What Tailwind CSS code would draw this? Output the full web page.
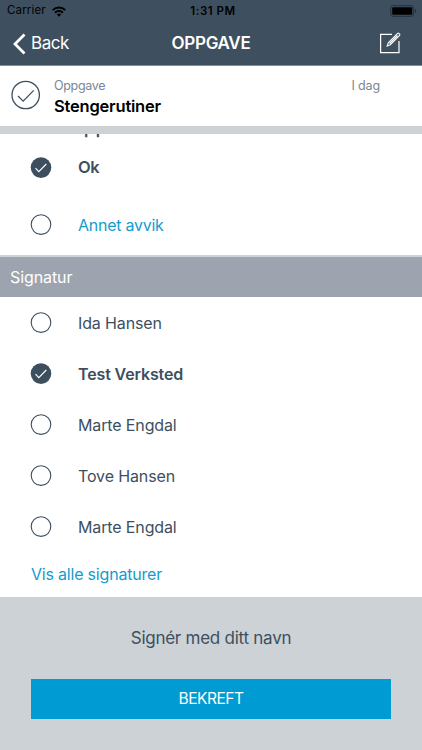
<!DOCTYPE html>
<html lang="no">
<head>
<meta charset="utf-8">
<title>Oppgave</title>
<script src="https://cdn.jsdelivr.net/npm/@tailwindcss/browser@4"></script>
</head>
<body class="w-[422px] h-[750px] overflow-hidden bg-white font-['Inter',sans-serif] text-[#3d4f5f] flex flex-col">
<svg class="hidden">
  <symbol id="off" viewBox="0 0 22 22"><circle cx="11" cy="10.6" r="9.8" fill="none" stroke="#3d4f5f" stroke-width="1.1"/></symbol>
  <symbol id="on" viewBox="0 0 22 22"><circle cx="11" cy="10.6" r="10.3" fill="#3d4f5f"/><path d="M5.500 11.100l3.300 3.600 7.500-7.700" fill="none" stroke="#fff" stroke-width="1.100"/></symbol>
</svg>
<header class="h-[66px] shrink-0 bg-[#3e505f] border-b border-[#808c9e] flex flex-col">
  <div class="h-[22px] grid grid-cols-3 items-center text-black text-[11.500px] leading-none">
    <div class="flex items-center pl-[7px] gap-[6px]"><span class="tracking-[0.150px]">Carrier</span>
      <svg class="w-[14px] h-[11px]" viewBox="0 0 14 11" fill="none" stroke="#000" stroke-width="2"><path d="M.7 4.100a9 9 0 0 1 12.600 0M3 6.700a5.700 5.700 0 0 1 8 0"/><path d="M7 10.800L4.800 8.500a3.200 3.200 0 0 1 4.400 0z" fill="#000" stroke="none"/></svg>
    </div>
    <div class="text-center font-semibold tracking-[0.550px] pl-[4px] pt-[2px]">1:31 PM</div>
    <div class="flex justify-end pr-[5px]"><svg class="w-[27px] h-[12px]" viewBox="0 0 27 12"><rect x=".7" y=".7" width="23" height="10.600" rx="2.500" fill="none" stroke="#23303a"/><rect x="2.200" y="2.200" width="20" height="7.600" rx="1" fill="#000"/><path d="M25 4v4c1.800-.6 1.800-3.400 0-4z" fill="#23303a"/></svg></div>
  </div>
  <div class="h-[43px] grid grid-cols-3 items-center text-white">
    <div class="flex items-center pl-[13px] gap-[5px]">
      <svg class="w-[13px] h-[22px]" viewBox="0 0 13 22"><path d="M11.500 1.500L2 11l9.500 9.500" fill="none" stroke="#fff" stroke-width="2.800"/></svg>
      <span class="text-[17px] tracking-[-0.450px]">Back</span>
    </div>
    <div class="text-center text-[17px] font-semibold tracking-[-0.300px]">OPPGAVE</div>
    <div class="flex justify-end pr-[21px] pb-[2px]"><svg class="w-[22px] h-[22px]" viewBox="0 0 22 22" fill="none" stroke="#fff"><path d="M13 2.300H1.600v18.400h18.400V9" stroke-width="1.200"/><path d="M8.200 14l1.100-3.300L18.600 1.400q.6-.6 1.300 0l.7.7q.6.6 0 1.300L11.300 12.700zM10.500 11.500l8-8" stroke-width="1.100"/></svg></div>
  </div>
</header>
<section class="h-[60px] shrink-0 flex">
  <svg class="w-[30px] h-[30px] mt-[14px] ml-[11px]" viewBox="0 0 30 30" fill="none" stroke="#3d4f5f" stroke-width="1.300"><circle cx="14.700" cy="15" r="13.700"/><path d="M7 16l5.200 5.100L22.700 10.400"/></svg>
  <div class="ml-[13px] pt-[11px]">
    <div class="text-[12.500px] leading-[17px] text-[#798794] tracking-[-0.300px]">Oppgave</div>
    <div class="text-[16.500px] leading-[22px] mt-[1px] font-semibold text-black tracking-[-0.200px]">Stengerutiner</div>
  </div>
  <div class="ml-auto pr-[42px] pt-[11px] text-[12.500px] leading-[17px] text-[#798794] tracking-[-0.150px]">I dag</div>
</section>
<div class="h-[8px] shrink-0 bg-[#cdd2d6]"></div>
<section class="h-[121px] shrink-0 overflow-hidden text-[16.500px]">
  <div class="h-[5px] flex items-end pl-[84px] overflow-hidden"><span class="font-semibold leading-[20px] tracking-[1.500px] mb-[1px]">pp</span></div>
  <div class="h-[57px] flex items-center pl-[30px]"><svg class="w-[22px] h-[22px]"><use href="#on"/></svg><span class="ml-[26px] font-semibold tracking-[-0.400px]">Ok</span></div>
  <div class="h-[57px] flex items-center pl-[30px]"><svg class="w-[22px] h-[22px]"><use href="#off"/></svg><span class="ml-[26px] text-[16px] text-[#169bcb] tracking-[-0.260px]">Annet avvik</span></div>
</section>
<h2 class="h-[42px] shrink-0 border-t-2 border-[#cdd2d6] bg-[#9ea4af] text-white text-[16px] flex items-center pl-[10px] tracking-[-0.100px]">Signatur</h2>
<section class="h-[300px] shrink-0 text-[16px] tracking-[-0.130px]">
  <div class="h-[51px] flex items-center pl-[30px]"><svg class="w-[22px] h-[22px]"><use href="#off"/></svg><span class="ml-[26px]">Ida Hansen</span></div>
  <div class="h-[51px] flex items-center pl-[30px]"><svg class="w-[22px] h-[22px]"><use href="#on"/></svg><span class="ml-[26px] font-semibold">Test Verksted</span></div>
  <div class="h-[51px] flex items-center pl-[30px]"><svg class="w-[22px] h-[22px]"><use href="#off"/></svg><span class="ml-[26px]">Marte Engdal</span></div>
  <div class="h-[51px] flex items-center pl-[30px]"><svg class="w-[22px] h-[22px]"><use href="#off"/></svg><span class="ml-[26px]">Tove Hansen</span></div>
  <div class="h-[51px] flex items-center pl-[30px]"><svg class="w-[22px] h-[22px]"><use href="#off"/></svg><span class="ml-[26px]">Marte Engdal</span></div>
  <div class="h-[45px] flex items-center pl-[31px] pb-[2px] text-[#169bcb] tracking-[-0.200px]">Vis alle signaturer</div>
</section>
<footer class="h-[153px] shrink-0 bg-[#cdd2d6] px-[31px] pt-[30px]">
  <div class="text-center text-[17px] leading-[22px] tracking-[-0.250px]">Signér med ditt navn</div>
  <button class="mt-[30px] w-full h-[40px] block bg-[#009bd2] text-white text-[15.500px] tracking-[-0.500px]">BEKREFT</button>
</footer>
</body>
</html>
